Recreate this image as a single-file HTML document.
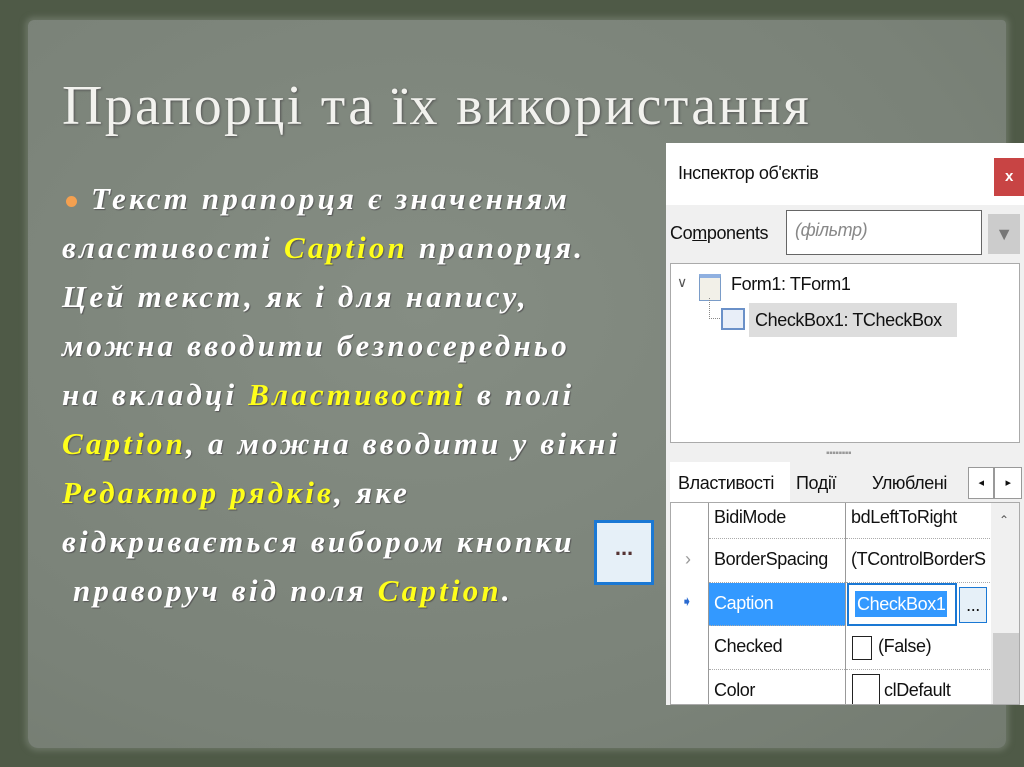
<!DOCTYPE html><html><head><meta charset="utf-8"><style>
body{margin:0;width:1024px;height:767px;overflow:hidden;background:#4f5a47;position:relative;font-family:"Liberation Sans",sans-serif}
.paper{position:absolute;left:28px;top:20px;width:978px;height:728px;background:radial-gradient(ellipse at 40% 40%,#858d83,#7a8278 70%,#737b70);border-radius:6px 4px 8px 10px;box-shadow:0 0 6px 3px #6a7464}
h1{position:absolute;left:62px;top:74px;margin:0;font:normal 56px "Liberation Serif",serif;color:#f2f2ee;letter-spacing:2.3px;text-shadow:1px 1px 2px #555;white-space:nowrap}
.txt{position:absolute;left:62px;top:174px;width:620px;font:bold italic 31px/49px "Liberation Serif",serif;letter-spacing:3.2px;color:#fff;text-shadow:1px 1px 1px #555;white-space:nowrap}
.y{color:#ffff1a}
.bul{display:inline-block;width:11px;height:11px;border-radius:50%;background:#f4a050;margin:0 14px 0 4px;vertical-align:middle}
.panel{position:absolute;left:666px;top:143px;width:358px;height:562px;background:#f0f0f0;font-size:18px;letter-spacing:-0.4px;color:#111;white-space:nowrap}
.tb{position:absolute;left:0;top:0;width:358px;height:62px;background:#fff}
.abs{position:absolute}
.cell{position:absolute;border-bottom:1px dotted #aaa;box-sizing:border-box;padding-left:5px;line-height:40px;white-space:nowrap;overflow:hidden}
</style></head><body>
<div class="paper"></div>
<h1>Прапорці та їх використання</h1>
<div class="txt"><span class="bul"></span>Текст прапорця є значенням<br>властивості <span class="y">Caption</span> прапорця.<br>Цей текст, як і для напису,<br>можна вводити безпосередньо<br>на вкладці <span class="y">Властивості</span> в полі<br><span class="y">Caption</span>, а можна вводити у вікні<br><span class="y">Редактор рядків</span>, яке<br>відкривається вибором кнопки<br>&nbsp;праворуч від поля <span class="y">Caption</span>.</div>
<div class="abs" style="left:594px;top:520px;width:54px;height:59px;border:3px solid #1a78d4;background:#e6f0f8;text-align:center;font:bold 22px/50px 'Liberation Sans';color:#533">...</div>
<div class="panel">
<div class="tb"><div class="abs" style="left:12px;top:20px">Інспектор об'єктів</div>
<div class="abs" style="left:328px;top:15px;width:30px;height:38px;background:#c84444;color:#fff;text-align:center;line-height:38px;font-size:15px;font-weight:bold">x</div></div>
<div class="abs" style="left:4px;top:80px">Co<u>m</u>ponents</div>
<div class="abs" style="left:120px;top:67px;width:196px;height:45px;background:#fff;border:1px solid #666;box-sizing:border-box;color:#888;font-style:italic;padding:9px 8px">(фільтр)</div>
<div class="abs" style="left:322px;top:71px;width:32px;height:40px;background:#ccc;color:#777;text-align:center;line-height:40px">▼</div>
<div class="abs" style="left:4px;top:120px;width:350px;height:180px;background:#fff;border:1px solid #aaa;box-sizing:border-box">
<div class="abs" style="left:6px;top:10px;color:#555;font-size:14px">∨</div>
<div class="abs" style="left:28px;top:10px;width:20px;height:22px;border:1px solid #7a9cc8;border-top:4px solid #8fb0e0;background:#f2f0e8"></div>
<div class="abs" style="left:60px;top:10px">Form1: TForm1</div>
<div class="abs" style="left:38px;top:34px;width:12px;height:20px;border-left:1px dotted #888;border-bottom:1px dotted #888"></div>
<div class="abs" style="left:50px;top:44px;width:20px;height:18px;border:2px solid #6a90c8;background:#e8eef8"></div>
<div class="abs" style="left:78px;top:39px;width:202px;height:34px;background:#ddd;padding-left:6px;line-height:34px">CheckBox1: TCheckBox</div>
</div>
<div class="abs" style="left:160px;top:305px;color:#999;font-size:10px">▪▪▪▪▪▪▪▪</div>
<div class="abs" style="left:4px;top:319px;width:120px;height:42px;background:#fff;line-height:42px;padding-left:8px;box-sizing:border-box">Властивості</div>
<div class="abs" style="left:130px;top:330px">Події</div>
<div class="abs" style="left:206px;top:330px">Улюблені</div>
<div class="abs" style="left:302px;top:324px;width:24px;height:30px;border:1px solid #999;background:#fff;text-align:center;font-size:11px;line-height:30px">◂</div>
<div class="abs" style="left:328px;top:324px;width:26px;height:30px;border:1px solid #999;background:#fff;text-align:center;font-size:11px;line-height:30px">▸</div>
<div class="abs" style="left:4px;top:359px;width:350px;height:203px;background:#fff;border:1px solid #aaa;box-sizing:border-box;overflow:hidden">
<div class="abs" style="left:37px;top:0;width:1px;height:210px;background:#999"></div>
<div class="abs" style="left:174px;top:0;width:1px;height:210px;background:#999"></div>
<div class="cell" style="left:38px;top:-8px;width:136px;height:44px;line-height:44px">BidiMode</div>
<div class="cell" style="left:175px;top:-8px;width:150px;height:44px;line-height:44px">bdLeftToRight</div>
<div class="cell" style="left:38px;top:36px;width:136px;height:44px">BorderSpacing</div>
<div class="cell" style="left:175px;top:36px;width:150px;height:44px">(TControlBorderS</div>
<div class="abs" style="left:14px;top:46px;color:#999">›</div>
<div class="cell" style="left:38px;top:80px;width:136px;height:43px;background:#3399ff;color:#fff">Caption</div>
<div class="abs" style="left:176px;top:80px;width:110px;height:43px;border:2px solid #1a78d4;box-sizing:border-box;background:#fff"><span style="position:absolute;left:6px;top:6px;background:#3399ff;color:#fff;padding:0 2px;line-height:26px">CheckBox1</span></div>
<div class="abs" style="left:288px;top:84px;width:26px;height:34px;border:1px solid #1a78d4;background:#e6f0f8;text-align:center;line-height:34px">...</div>
<div class="abs" style="left:10px;top:90px;color:#2a6ad0;font-size:14px">➧</div>
<div class="cell" style="left:38px;top:123px;width:136px;height:44px">Checked</div>
<div class="cell" style="left:175px;top:123px;width:150px;height:44px;padding-left:32px">(False)</div>
<div class="abs" style="left:181px;top:133px;width:18px;height:22px;border:1px solid #222"></div>
<div class="cell" style="left:38px;top:167px;width:136px;height:44px">Color</div>
<div class="cell" style="left:175px;top:167px;width:150px;height:44px;padding-left:38px">clDefault</div>
<div class="abs" style="left:181px;top:171px;width:26px;height:40px;border:1px solid #222"></div>
<div class="abs" style="left:320px;top:0;width:30px;height:210px;background:#f0f0f0"></div>
<div class="abs" style="left:322px;top:130px;width:26px;height:80px;background:#cdcdcd"></div>
<div class="abs" style="left:328px;top:10px;font-size:12px;color:#555">⌃</div>
</div>
</div>
</body></html>
